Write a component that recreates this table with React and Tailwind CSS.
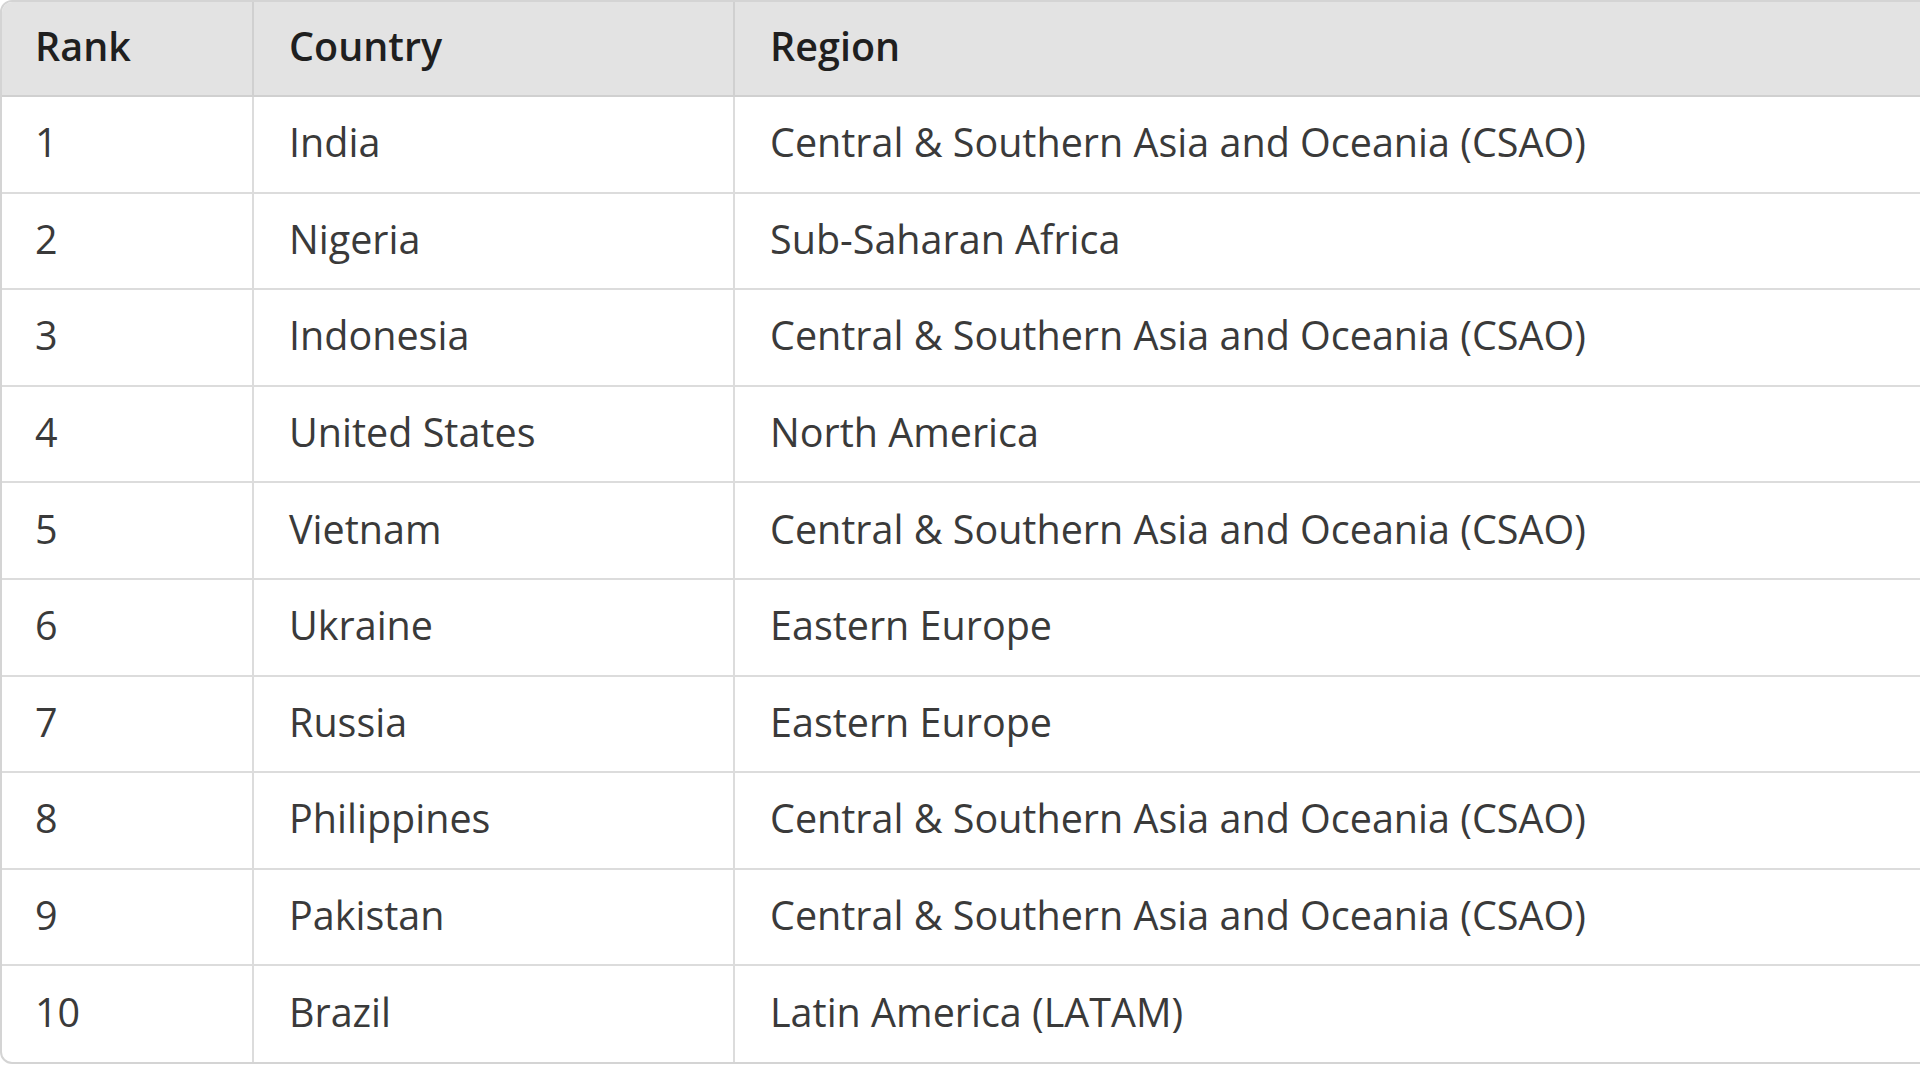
import React from 'react';

const rows = [
  ['1', 'India', 'Central & Southern Asia and Oceania (CSAO)'],
  ['2', 'Nigeria', 'Sub-Saharan Africa'],
  ['3', 'Indonesia', 'Central & Southern Asia and Oceania (CSAO)'],
  ['4', 'United States', 'North America'],
  ['5', 'Vietnam', 'Central & Southern Asia and Oceania (CSAO)'],
  ['6', 'Ukraine', 'Eastern Europe'],
  ['7', 'Russia', 'Eastern Europe'],
  ['8', 'Philippines', 'Central & Southern Asia and Oceania (CSAO)'],
  ['9', 'Pakistan', 'Central & Southern Asia and Oceania (CSAO)'],
  ['10', 'Brazil', 'Latin America (LATAM)'],
];

const App = () => {
  return (
    <div className="w-[1920px] h-[1080px] bg-white overflow-hidden" style={{ fontFamily: '"Open Sans", "Noto Sans", sans-serif' }}>
      <div className="w-[1960px] border-2 border-[#d4d4d4] rounded-[12px] overflow-hidden">
        <table className="w-full border-collapse text-[39.5px] text-[#3a3a3a]">
          <colgroup>
            <col className="w-[251px]" />
            <col className="w-[481px]" />
            <col />
          </colgroup>
          <thead>
            <tr className="bg-[#e3e3e3] h-[94px]">
              <th className="text-left font-semibold text-[#1f1f1f] pl-[33px] pb-[4px] border-b-2 border-r-2 border-[#d0d0d0]">Rank</th>
              <th className="text-left font-semibold text-[#1f1f1f] pl-[35px] pb-[4px] border-b-2 border-r-2 border-[#d0d0d0]">Country</th>
              <th className="text-left font-semibold text-[#1f1f1f] pl-[35px] pb-[4px] border-b-2 border-[#d0d0d0]">Region</th>
            </tr>
          </thead>
          <tbody>
            {rows.map((r, i) => (
              <tr key={r[0]} className="h-[96.6px]">
                <td className={`pl-[33px] pb-[3px] border-r-2 border-[#dcdcdc] ${i < rows.length - 1 ? 'border-b-2' : ''}`}>{r[0]}</td>
                <td className={`pl-[35px] pb-[3px] border-r-2 border-[#dcdcdc] ${i < rows.length - 1 ? 'border-b-2' : ''}`}>{r[1]}</td>
                <td className={`pl-[35px] pb-[3px] border-[#dcdcdc] ${i < rows.length - 1 ? 'border-b-2' : ''}`}>{r[2]}</td>
              </tr>
            ))}
          </tbody>
        </table>
      </div>
    </div>
  );
};

export default App;
